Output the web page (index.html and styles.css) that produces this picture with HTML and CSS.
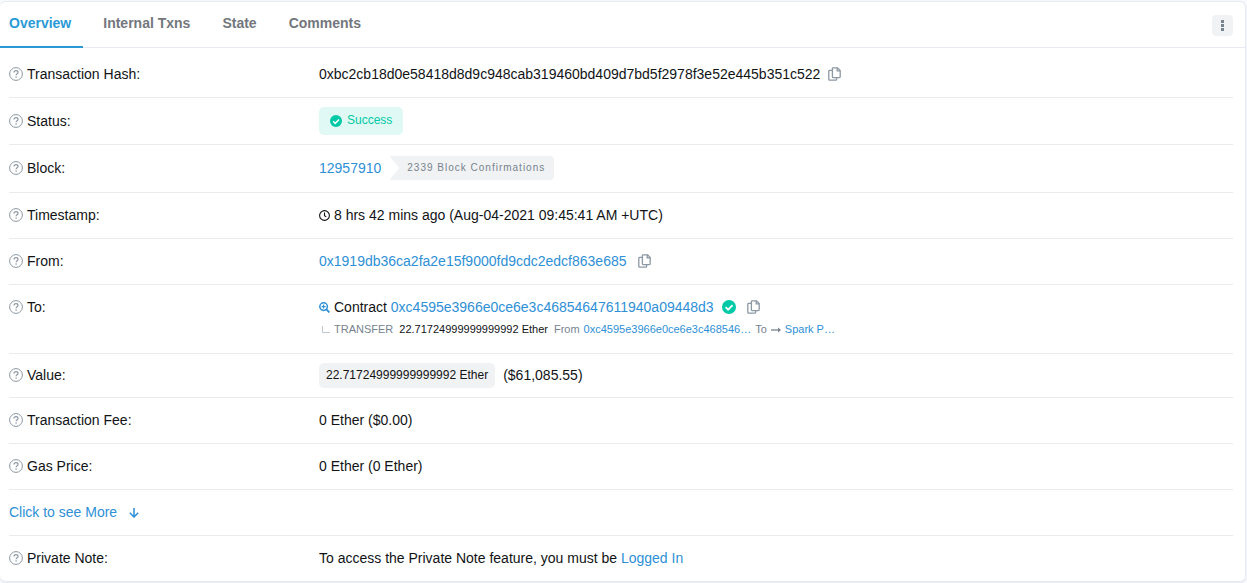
FILE: index.html
```html
<!DOCTYPE html>
<html lang="en">
<head>
<meta charset="utf-8">
<meta name="viewport" content="width=device-width, initial-scale=1">
<title>Transaction Details</title>
<link rel="stylesheet" href="styles.css">
</head>
<body>
<svg class="sprite" aria-hidden="true">
  <symbol id="help" viewBox="0 0 14 14"><circle cx="7" cy="7" r="6.4" fill="none" stroke="currentColor" stroke-width="1"/><path d="M5 5.500C5 4.200 5.900 3.600 7 3.600s2 .7 2 1.800c0 1.300-1.900 1.400-1.900 2.800" fill="none" stroke="currentColor" stroke-width="1.200"/><circle cx="7.1" cy="10" r=".8" fill="currentColor"/></symbol>
  <symbol id="copy" viewBox="0 0 13 14"><path d="M5.2.8h4.400l2.600 2.600v6.400c0 .5-.3.8-.8.8H5.200c-.5 0-.8-.3-.8-.8V1.600c0-.5.3-.8.8-.8zM9.200.8v3h3M4.400 3.400H1.600c-.5 0-.8.3-.8.8v8.200c0 .5.3.8.8.8h6.200c.5 0 .8-.3.8-.8v-1.800" fill="none" stroke="currentColor" stroke-width="1.300"/></symbol>
  <symbol id="check" viewBox="0 0 14 14"><circle cx="7" cy="7" r="7" fill="currentColor"/><path d="M3.600 7.200l2.500 2.500 4.500-4.500" fill="none" stroke="#fff" stroke-width="1.800"/></symbol>
</svg>
<main class="card">
  <header class="card-header">
    <nav class="tabs">
      <a class="tab active" href="#overview">Overview</a>
      <a class="tab" href="#internal">Internal Txns</a>
      <a class="tab" href="#state">State</a>
      <a class="tab" href="#comments">Comments</a>
    </nav>
    <button class="menu" type="button" aria-label="More options"><svg width="3" height="11" viewBox="0 0 3 11"><path d="M0 0h3v3H0zM0 4h3v3H0zM0 8h3v3H0z" fill="currentColor"/></svg></button>
  </header>
  <div class="details" id="overview">
    <div class="row">
      <div class="label"><svg class="help"><use href="#help"/></svg>Transaction Hash:</div>
      <div class="value">0xbc2cb18d0e58418d8d9c948cab319460bd409d7bd5f2978f3e52e445b351c522<button class="copy near" type="button" aria-label="Copy hash"><svg><use href="#copy"/></svg></button></div>
    </div>
    <div class="row badge-row">
      <div class="label"><svg class="help"><use href="#help"/></svg>Status:</div>
      <div class="value"><span class="success"><svg><use href="#check"/></svg>Success</span></div>
    </div>
    <div class="row block-row">
      <div class="label"><svg class="help"><use href="#help"/></svg>Block:</div>
      <div class="value"><a href="#block">12957910</a><span class="confirmations">2339 Block Confirmations</span></div>
    </div>
    <div class="row">
      <div class="label"><svg class="help"><use href="#help"/></svg>Timestamp:</div>
      <div class="value"><svg class="lead" viewBox="0 0 11 11"><circle cx="5.500" cy="5.500" r="4.900" fill="none" stroke="currentColor" stroke-width="1.100"/><path d="M5.500 2.500v3.200l1.800 1.200" fill="none" stroke="currentColor" stroke-width="1.100"/></svg>8 hrs 42 mins ago (Aug-04-2021 09:45:41 AM +UTC)</div>
    </div>
    <div class="row">
      <div class="label"><svg class="help"><use href="#help"/></svg>From:</div>
      <div class="value"><a href="#from">0x1919db36ca2fa2e15f9000fd9cdc2edcf863e685</a><button class="copy" type="button" aria-label="Copy sender"><svg><use href="#copy"/></svg></button></div>
    </div>
    <div class="row to-row">
      <div class="label"><svg class="help"><use href="#help"/></svg>To:</div>
      <div>
        <div class="value"><svg class="lead blue" viewBox="0 0 11 11"><circle cx="4.600" cy="4.600" r="3.800" fill="none" stroke="currentColor" stroke-width="1.500"/><path d="M7.400 7.400l3 3" stroke="currentColor" stroke-width="1.900"/><path d="M2.600 4.600h4M4.600 2.600v4" stroke="currentColor" stroke-width="1.100"/></svg><span>Contract <a href="#to">0xc4595e3966e0ce6e3c46854647611940a09448d3</a></span><svg class="verified"><use href="#check"/></svg><button class="copy" type="button" aria-label="Copy contract"><svg><use href="#copy"/></svg></button></div>
        <div class="transfer"><svg class="elbow" viewBox="0 0 8 7"><path d="M.5 0v6.500H8" fill="none" stroke="currentColor"/></svg><span>TRANSFER</span><span class="amount">22.71724999999999992 Ether</span><span>From</span><a href="#to">0xc4595e3966e0ce6e3c468546…</a><span>To</span><svg class="arrow" viewBox="0 0 10 6"><path d="M0 3h8" stroke="currentColor" stroke-width="1.300"/><path d="M7 .5L10 3 7 5.500z" fill="currentColor"/></svg><a href="#pool">Spark P…</a></div>
      </div>
    </div>
    <div class="row value-row">
      <div class="label"><svg class="help"><use href="#help"/></svg>Value:</div>
      <div class="value"><span class="ether">22.71724999999999992 Ether</span>($61,085.55)</div>
    </div>
    <div class="row">
      <div class="label"><svg class="help"><use href="#help"/></svg>Transaction Fee:</div>
      <div class="value">0 Ether ($0.00)</div>
    </div>
    <div class="row">
      <div class="label"><svg class="help"><use href="#help"/></svg>Gas Price:</div>
      <div class="value">0 Ether (0 Ether)</div>
    </div>
    <div class="row">
      <a class="more" href="#more">Click to see More<svg viewBox="0 0 10 10"><path d="M5 0v9M.8 4.800L5 9l4.200-4.200" fill="none" stroke="currentColor" stroke-width="1.500"/></svg></a>
    </div>
    <div class="row">
      <div class="label"><svg class="help"><use href="#help"/></svg>Private Note:</div>
      <div class="value"><span>To access the Private Note feature, you must be <a href="#login">Logged In</a></span></div>
    </div>
  </div>
</main>
</body>
</html>
```
FILE: styles.css
```css
* { box-sizing: border-box; }
body {
  margin: 0;
  padding: 1px 1px 1px 0;
  background: #f8f9fc;
  color: #111315;
  font: 14px/21px "Liberation Sans", Helvetica, Arial, sans-serif;
}
a { color: #2e90d6; text-decoration: none; }
button { border: 0; padding: 0; cursor: pointer; }
svg { display: block; flex: none; }
.sprite { position: absolute; width: 0; height: 0; }
.card {
  background: #fff;
  border: 1px solid #e7eaf3;
  border-left: 0;
  border-radius: 6px;
  box-shadow: 0 1px 2px #e7eaf3;
}
.card-header {
  display: flex;
  align-items: center;
  justify-content: space-between;
  padding-right: 12px;
  border-bottom: 1px solid #e7eaf3;
}
.tabs { display: flex; gap: 8px; margin-bottom: -1px; }
.tab {
  padding: 11px 12px 12px;
  border-bottom: 2px solid transparent;
  color: #73777d;
  font-weight: 700;
}
.tab:first-child { padding-left: 9px; }
.tab.active { color: #2a9ad6; border-color: #2a9ad6; }
.menu {
  display: grid;
  place-items: center;
  width: 21px;
  height: 21px;
  margin-top: 2px;
  border-radius: 4px;
  background: #f1f2f4;
  color: #77838f;
}
.details { padding: 4px 12px 0 9px; }
.row {
  display: grid;
  grid-template-columns: 25% 1fr;
  column-gap: 4px;
  padding: 12px 0;
  border-bottom: 1px solid #e9ecef;
}
.row:last-child { border-bottom: 0; }
.label, .value, .more { display: flex; align-items: center; }
.label { gap: 4px; }
.help { width: 14px; height: 14px; margin-bottom: 1px; color: #8c98a4; }
.copy { margin: 0 0 1px 11px; background: none; color: #8c98a4; }
.copy.near { margin-left: 8px; }
.copy svg { width: 13px; height: 14px; }
.lead { width: 11px; height: 11px; margin-right: 4px; }
.blue { color: #2e90d6; }
.badge-row { padding: 9px 0; }
.success {
  display: flex;
  align-items: center;
  gap: 5px;
  padding: 3px 11px 4px;
  border-radius: 5px;
  background: #e0f9f4;
  color: #00c9a7;
  font-size: 12px;
}
.success svg { width: 12px; height: 12px; }
.block-row { padding: 11px 0 12px; }
.confirmations {
  margin-left: 8px;
  padding: 0 9px 0 18px;
  border-radius: 0 4px 4px 0;
  background: #f1f2f4;
  clip-path: polygon(0 0, 100% 0, 100% 100%, 0 100%, 10px 50%);
  color: #77838f;
  font-size: 10px;
  line-height: 24px;
  letter-spacing: 1px;
}
.to-row { align-items: start; padding-bottom: 13px; }
.verified { width: 14px; height: 14px; margin: 0 0 1px 8px; color: #00c9a7; }
.transfer {
  display: flex;
  align-items: center;
  gap: 4px;
  padding: 1px 0 0 3px;
  color: #77838f;
  font-size: 11px;
}
.elbow { width: 8px; height: 7px; color: #bdc5d1; }
.amount { margin: 0 2px; color: #111315; }
.arrow { width: 10px; height: 6px; }
.value-row { padding: 9px 0; }
.ether {
  margin-right: 8px;
  padding: 2px 7px;
  border-radius: 5px;
  background: #f1f2f4;
  font-size: 12px;
}
.more svg { width: 10px; height: 10px; margin-left: 12px; }
```
